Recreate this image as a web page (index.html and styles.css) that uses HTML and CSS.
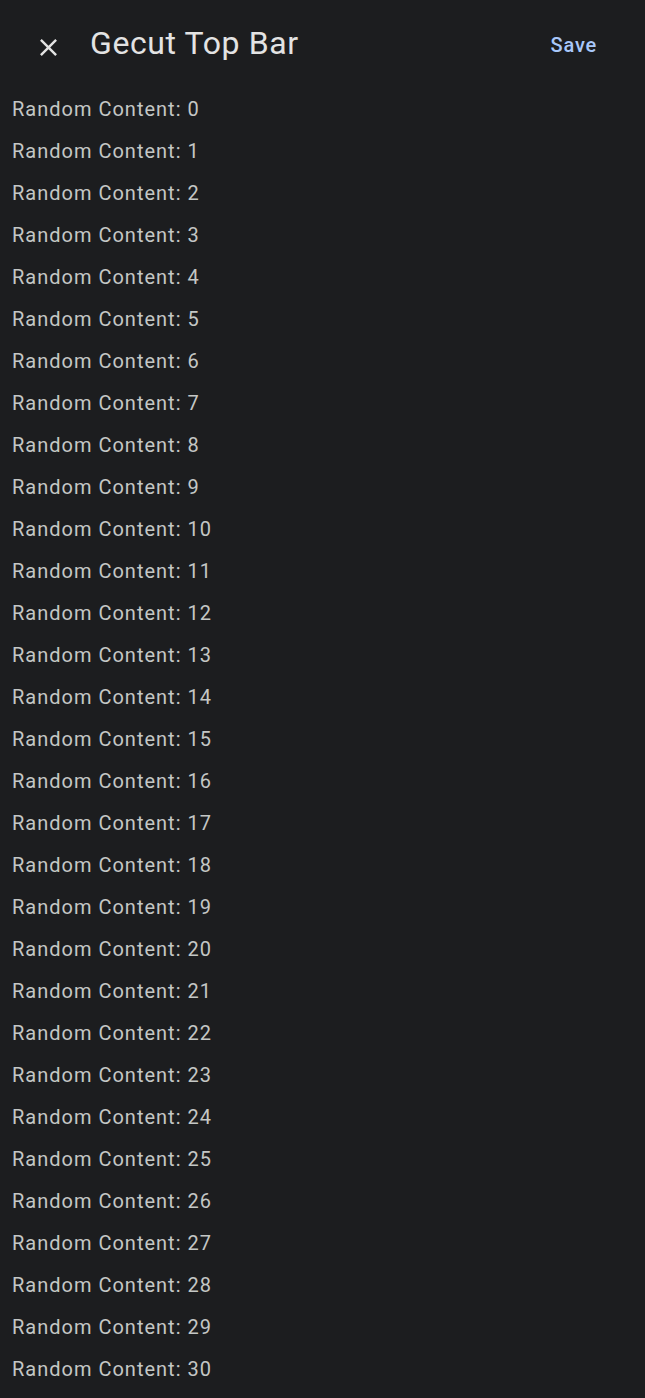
FILE: index.html
```html
<!DOCTYPE html>
<html lang="en">
<head>
<meta charset="utf-8">
<title>Gecut Top Bar</title>
<link rel="stylesheet" href="styles.css">
</head>
<body>
<header class="top-bar">
  <button class="icon-btn" aria-label="Close">
    <svg class="icon" viewBox="0 0 24 24" width="29" height="29"><path fill="currentColor" d="M19 6.41L17.59 5 12 10.59 6.41 5 5 6.41 10.59 12 5 17.59 6.41 19 12 13.41 17.59 19 19 17.59 13.41 12z"/></svg>
  </button>
  <h1 class="title">Gecut Top Bar</h1>
  <button class="text-btn">Save</button>
</header>
<main class="content">
  <div class="row">Random Content: 0</div>
  <div class="row">Random Content: 1</div>
  <div class="row">Random Content: 2</div>
  <div class="row">Random Content: 3</div>
  <div class="row">Random Content: 4</div>
  <div class="row">Random Content: 5</div>
  <div class="row">Random Content: 6</div>
  <div class="row">Random Content: 7</div>
  <div class="row">Random Content: 8</div>
  <div class="row">Random Content: 9</div>
  <div class="row">Random Content: 10</div>
  <div class="row">Random Content: 11</div>
  <div class="row">Random Content: 12</div>
  <div class="row">Random Content: 13</div>
  <div class="row">Random Content: 14</div>
  <div class="row">Random Content: 15</div>
  <div class="row">Random Content: 16</div>
  <div class="row">Random Content: 17</div>
  <div class="row">Random Content: 18</div>
  <div class="row">Random Content: 19</div>
  <div class="row">Random Content: 20</div>
  <div class="row">Random Content: 21</div>
  <div class="row">Random Content: 22</div>
  <div class="row">Random Content: 23</div>
  <div class="row">Random Content: 24</div>
  <div class="row">Random Content: 25</div>
  <div class="row">Random Content: 26</div>
  <div class="row">Random Content: 27</div>
  <div class="row">Random Content: 28</div>
  <div class="row">Random Content: 29</div>
  <div class="row">Random Content: 30</div>
</main>
</body>
</html>
```
FILE: styles.css
```css
html, body {
  margin: 0;
  padding: 0;
  background: #1c1d1f;
  font-family: Roboto, "Noto Sans", sans-serif;
}
.top-bar {
  display: flex;
  align-items: flex-start;
  height: 88px;
  padding: 0 48px 0 33px;
  box-sizing: border-box;
}
.icon-btn {
  display: flex;
  align-items: center;
  justify-content: center;
  width: 30px;
  height: 30px;
  padding: 0;
  margin: 32px 0 0 0;
  border: 0;
  background: none;
  color: #e3e3e3;
}
.icon {
  display: block;
}
.title {
  flex: 1;
  margin: 23px 0 0 27px;
  font-size: 32px;
  font-weight: 400;
  letter-spacing: 0.6px;
  color: #e3e3e3;
  line-height: 40px;
}
.text-btn {
  border: 0;
  background: none;
  padding: 0;
  margin: 33px 0 0 0;
  font-family: inherit;
  font-size: 20px;
  line-height: 24px;
  font-weight: 500;
  letter-spacing: 0.8px;
  color: #a8c7fa;
}
.content {
  display: flex;
  flex-direction: column;
  padding-left: 12px;
}
.row {
  height: 42px;
  line-height: 42px;
  font-size: 20px;
  letter-spacing: 1px;
  color: #c4c7c5;
}
```
